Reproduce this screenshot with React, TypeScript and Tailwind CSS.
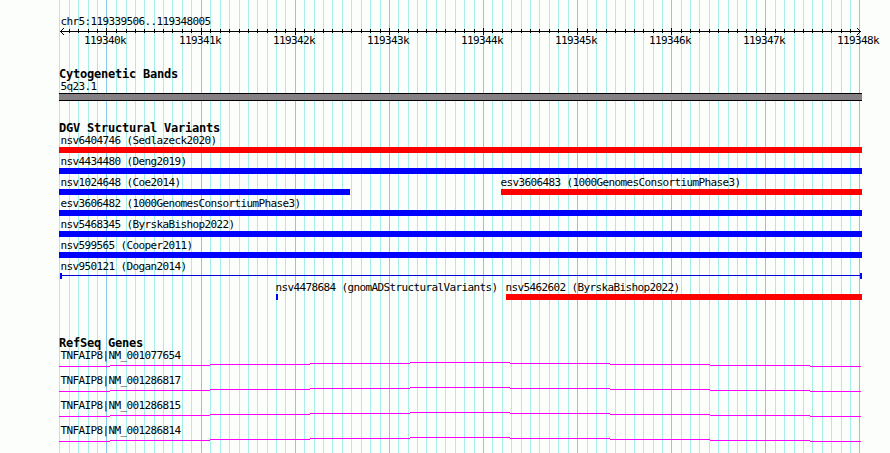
import React from "react";

const MAJOR = [106, 201, 295, 389, 483, 577, 671, 765, 859];
const MINOR = [
  59, 69, 78, 88, 97, 116, 126, 135, 144, 154, 163, 172, 182, 191, 210, 220, 229, 239, 248, 257, 267, 276, 285,
  304, 314, 323, 332, 342, 351, 361, 370, 380, 398, 408, 417, 426, 436, 445, 455, 464, 474, 492, 502, 511, 521,
  530, 539, 549, 558, 568, 587, 596, 606, 615, 625, 634, 643, 653, 662, 681, 690, 699, 709, 718, 728, 737, 746,
  756, 775, 784, 794, 803, 812, 822, 831, 841, 850,
];
const STEPS = [
  [0, 51, 4], [51, 100, 3], [151, 100, 2], [251, 100, 1], [351, 100, 0],
  [451, 100, 1], [551, 100, 2], [651, 100, 3], [751, 51, 4],
];

function Label({ text }: { text: string }) {
  return (
    <span className="block h-3 w-max text-[11px] leading-[14px] tracking-[-0.622px] whitespace-pre">{text}</span>
  );
}

function Heading({ text }: { text: string }) {
  return <h2 className="h-3 w-max text-[12px] leading-[12px] font-bold tracking-[-0.224px] whitespace-pre">{text}</h2>;
}

function Grid() {
  return (
    <svg className="absolute inset-0" width="890" height="453" shapeRendering="crispEdges">
      {MINOR.map((x) => <rect key={x} x={x} y="0" width="1" height="453" fill="#a8ede9" />)}
      {MAJOR.map((x) => <rect key={x} x={x} y="0" width="1" height="453" fill="#87c9e9" />)}
    </svg>
  );
}

function Ruler() {
  return (
    <svg className="block" width="831" height="8" viewBox="59 27 831 8" shapeRendering="crispEdges">
      <rect x="60" y="31" width="801" height="1" />
      {MINOR.slice(1).map((x) => <rect key={x} x={x} y="29" width="1" height="4" />)}
      {MAJOR.slice(0, 8).map((x) => <rect key={x} x={x} y="28" width="1" height="7" />)}
      {[1, 2, 3].map((d) => (
        <g key={d}>
          <rect x={60 + d} y={31 - d} width="1" height="1" />
          <rect x={60 + d} y={31 + d} width="1" height="1" />
          <rect x={860 - d} y={31 - d} width="1" height="1" />
          <rect x={860 - d} y={31 + d} width="1" height="1" />
        </g>
      ))}
    </svg>
  );
}

function Variant({ label, bar }: { label: string; bar: string }) {
  return (
    <div className="flex h-[21px] w-[803px] flex-col">
      <div className="pl-[1.5px]"><Label text={label} /></div>
      <div className={"mt-px h-1.5 " + bar} />
    </div>
  );
}

function Gene({ id }: { id: string }) {
  return (
    <div className="h-[25px]">
      <div className="pl-[1.5px]"><Label text={"TNFAIP8|" + id} /></div>
      <svg className="mt-px block" width="802" height="5" shapeRendering="crispEdges">
        {STEPS.map(([x, w, y]) => <rect key={x} x={x} y={y} width={w} height="1" fill="#ff00ff" />)}
      </svg>
    </div>
  );
}

export default function App() {
  return (
    <div className="relative h-[453px] w-[890px] overflow-hidden bg-[#fcfefc] font-['DejaVu_Sans_Mono',monospace] text-black">
      <Grid />
      <main className="relative flex flex-col pt-[15px] pl-[59px]">
        <div className="pl-[1.5px]"><Label text="chr5:119339506..119348005" /></div>
        <Ruler />
        <div className="-mt-px flex h-3 pl-[25px]">
          {MAJOR.map((x, i) => (
            <div key={x} className={i === 0 ? "w-[95px] shrink-0" : "w-[94px] shrink-0"}>
              <Label text={119340 + i + "k"} />
            </div>
          ))}
        </div>
        <section className="mt-[22px]">
          <Heading text="Cytogenetic Bands" />
          <div className="pl-[1.5px]"><Label text="5q23.1" /></div>
          <div className="mt-px h-2 w-[803px] border-y border-black bg-[#848084]" />
        </section>
        <section className="mt-[21px]">
          <Heading text="DGV Structural Variants" />
          <Variant label="nsv6404746 (Sedlazeck2020)" bar="bg-[#ff0000]" />
          <Variant label="nsv4434480 (Deng2019)" bar="bg-[#0000ff]" />
          <div className="flex h-[21px] w-[803px] justify-between">
            <div className="w-[291px]">
              <div className="pl-[1.5px]"><Label text="nsv1024648 (Coe2014)" /></div>
              <div className="mt-px h-1.5 bg-[#0000ff]" />
            </div>
            <div className="w-[361px]">
              <div className="-ml-[0.5px]"><Label text="esv3606483 (1000GenomesConsortiumPhase3)" /></div>
              <div className="mt-px h-1.5 bg-[#ff0000]" />
            </div>
          </div>
          <Variant label="esv3606482 (1000GenomesConsortiumPhase3)" bar="bg-[#0000ff]" />
          <Variant label="nsv5468345 (ByrskaBishop2022)" bar="bg-[#0000ff]" />
          <Variant label="nsv599565 (Cooper2011)" bar="bg-[#0000ff]" />
          <div className="h-[21px] w-[803px]">
            <div className="pl-[1.5px]"><Label text="nsv950121 (Dogan2014)" /></div>
            <div className="mt-px ml-px flex h-1.5 justify-between">
              <div className="w-0.5 bg-[#0000ff]" />
              <div className="mt-[2px] h-px grow bg-[#0000dd]" />
              <div className="w-0.5 bg-[#0000ff]" />
            </div>
          </div>
          <div className="flex h-[21px] pl-[217px]">
            <div className="w-[230px]">
              <div className="-ml-[0.5px]"><Label text="nsv4478684 (gnomADStructuralVariants)" /></div>
              <div className="mt-px h-1.5 w-0.5 bg-[#0000ff]" />
            </div>
            <div className="w-[356px]">
              <div className="-ml-[0.5px]"><Label text="nsv5462602 (ByrskaBishop2022)" /></div>
              <div className="mt-px h-1.5 bg-[#ff0000]" />
            </div>
          </div>
        </section>
        <section className="mt-[35px]">
          <Heading text="RefSeq Genes" />
          <Gene id="NM_001077654" />
          <Gene id="NM_001286817" />
          <Gene id="NM_001286815" />
          <Gene id="NM_001286814" />
        </section>
      </main>
    </div>
  );
}
